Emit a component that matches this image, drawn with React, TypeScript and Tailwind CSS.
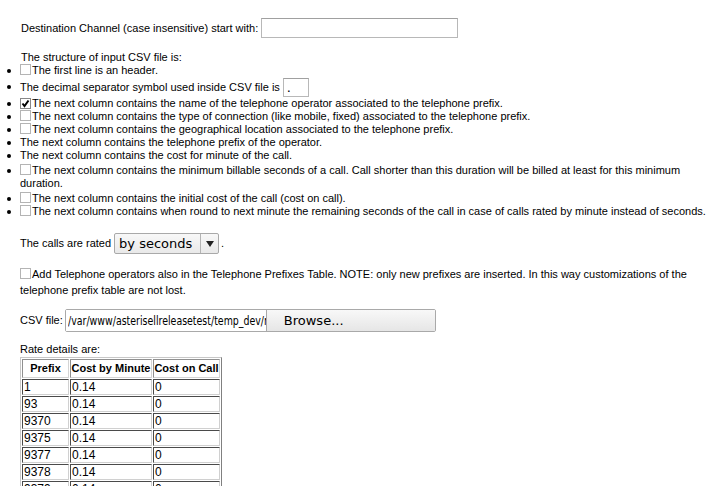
import React from 'react';

const rates = ['1', '93', '9370', '9375', '9377', '9378', '9379', '93793'];

function Box({ checked = false }: { checked?: boolean }) {
  return (
    <span
      className={`inline-flex items-center justify-center w-[11px] h-[11px] mr-[1px] align-[-1px] border bg-white ${
        checked ? 'border-[#888]' : 'border-[#b4b4b4]'
      }`}
    >
      {checked && (
        <svg width="9" height="9" viewBox="0 0 9 9">
          <path d="M1.5 4.5 L3.5 7 L7.5 1.5" stroke="#000" strokeWidth="2" fill="none" />
        </svg>
      )}
    </span>
  );
}

function Item({ children, className = '' }: { children: React.ReactNode; className?: string }) {
  return (
    <li className={`flex ${className}`}>
      <span className="w-[20px] shrink-0 flex justify-start pl-[7px] pt-[5px]">
        <span className="w-[4px] h-[4px] rounded-full bg-black" />
      </span>
      <span className="flex-1">{children}</span>
    </li>
  );
}

export default function App() {
  return (
    <div className="w-[726px] h-[486px] overflow-hidden bg-white text-black font-['Liberation_Sans',Arial,sans-serif] text-[11px] leading-[13px] pr-[16px]">
      <div className="flex items-center h-[20px] mt-[18px] pl-[21px]">
        <span>Destination Channel (case insensitive) start with:</span>
        <span className="ml-[3px] w-[197px] h-[20px] bg-white border border-[#b8b8b8] border-t-[#a0a0a0]" />
      </div>

      <div className="mt-[13px] pl-[21px]">The structure of input CSV file is:</div>
      <ul>
        <Item>
          <Box />The first line is an header.
        </Item>
        <li className="flex h-[20px] items-center">
          <span className="w-[20px] shrink-0 pl-[7px]">
            <span className="block w-[4px] h-[4px] rounded-full bg-black" />
          </span>
          <span>The decimal separator symbol used inside CSV file is</span>
          <span className="ml-[3px] w-[26px] h-[19px] border border-[#b8b8b8] border-t-[#a0a0a0] font-['DejaVu_Sans',sans-serif] text-[13px] leading-[17px] pl-[3px]">
            .
          </span>
        </li>
        <Item>
          <Box checked />The next column contains the name of the telephone operator associated to the telephone prefix.
        </Item>
        <Item>
          <Box />The next column contains the type of connection (like mobile, fixed) associated to the telephone prefix.
        </Item>
        <Item>
          <Box />The next column contains the geographical location associated to the telephone prefix.
        </Item>
        <Item>The next column contains the telephone prefix of the operator.</Item>
        <Item>The next column contains the cost for minute of the call.</Item>
        <Item className="mt-[2px]">
          <Box />The next column contains the minimum billable seconds of a call. Call shorter than this duration will be billed at least for this minimum duration.
        </Item>
        <Item className="mt-[2px]">
          <Box />The next column contains the initial cost of the call (cost on call).
        </Item>
        <Item>
          <Box />The next column contains when round to next minute the remaining seconds of the call in case of calls rated by minute instead of seconds.
        </Item>
      </ul>

      <div className="flex items-center h-[21px] mt-[15px] pl-[20px]">
        <span>The calls are rated</span>
        <span className="ml-[3px] flex items-stretch h-[21px] w-[105px] border border-[#a9a9a9] rounded-[2px] bg-gradient-to-b from-[#f8f8f8] to-[#e9e9e9] font-['DejaVu_Sans',sans-serif] text-[13px]">
          <span className="flex-1 flex items-center pl-[4px]">by seconds</span>
          <span className="w-[18px] flex items-center justify-center border-l border-[#b4b4b4]">
            <svg width="8" height="6" viewBox="0 0 8 6">
              <path d="M0 0 H8 L4 6 Z" fill="#222" />
            </svg>
          </span>
        </span>
        <span className="ml-[2px]">.</span>
      </div>

      <p className="mt-[12px] pl-[20px] leading-[16px]">
        <Box />Add Telephone operators also in the Telephone Prefixes Table. NOTE: only new prefixes are inserted. In this way customizations of the telephone prefix table are not lost.
      </p>

      <div className="flex items-center h-[23px] mt-[11px] pl-[20px]">
        <span>CSV file:</span>
        <span className="ml-[2px] flex h-[23px] border border-[#a9a9a9] rounded-[2px] font-['DejaVu_Sans',sans-serif] text-[13px]">
          <span className="w-[200px] overflow-hidden whitespace-nowrap bg-white flex items-center pl-[2px]">
            <span className="inline-block origin-left scale-x-[0.725]">/var/www/asterisellreleasetest/temp_dev/rates.csv</span>
          </span>
          <span className="w-[169px] flex items-center pl-[17px] border-l border-[#a9a9a9] bg-gradient-to-b from-[#f8f8f8] to-[#e6e6e6]">
            Browse...
          </span>
        </span>
      </div>

      <div className="mt-[11px] pl-[20px]">Rate details are:</div>
      <div className="pl-[20px] mt-[1px]">
        <table className="border-separate border-spacing-[1px] border border-t-[#c8c8c8] border-l-[#c8c8c8] border-r-[#808080] border-b-[#808080]">
          <thead>
            <tr>
              <th className="w-[47px] h-[19px] p-0 font-bold text-center border border-t-[#909090] border-l-[#909090] border-r-[#d4d4d4] border-b-[#d4d4d4]">
                Prefix
              </th>
              <th className="w-[82px] h-[19px] p-0 font-bold text-center border border-t-[#909090] border-l-[#909090] border-r-[#d4d4d4] border-b-[#d4d4d4]">
                Cost by Minute
              </th>
              <th className="w-[67px] h-[19px] p-0 font-bold text-center border border-t-[#909090] border-l-[#909090] border-r-[#d4d4d4] border-b-[#d4d4d4]">
                Cost on Call
              </th>
            </tr>
          </thead>
          <tbody className="text-[12px] leading-[14px]">
            {rates.map((r) => (
              <tr key={r}>
                {[r, '0.14', '0'].map((v, i) => (
                  <td
                    key={i}
                    className="h-[16px] p-0 pl-[1px] align-top border border-t-[#4a4a4a] border-l-[#4a4a4a] border-r-[#d0d0d0] border-b-[#d0d0d0]"
                  >
                    {v}
                  </td>
                ))}
              </tr>
            ))}
          </tbody>
        </table>
      </div>
    </div>
  );
}
